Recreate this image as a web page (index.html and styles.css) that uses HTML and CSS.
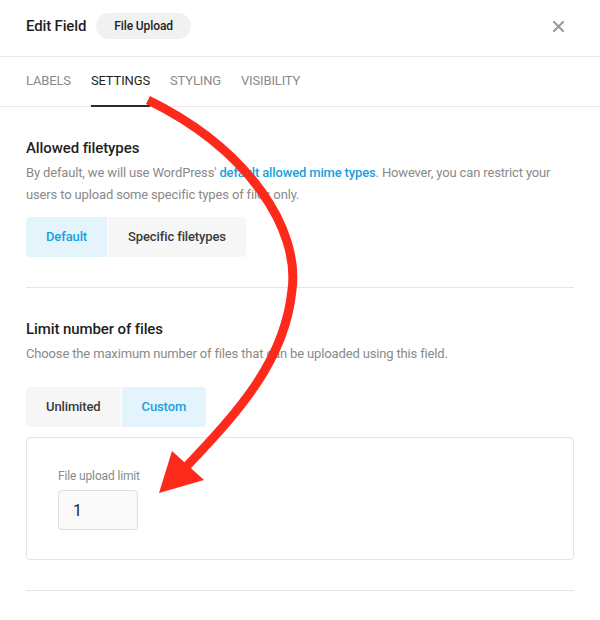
FILE: index.html
```html
<!DOCTYPE html>
<html lang="en">
<head>
<meta charset="utf-8">
<title>Edit Field</title>
<link rel="stylesheet" href="styles.css">
</head>
<body>
<div class="page">
  <header class="header">
    <h1 class="title">Edit Field</h1>
    <span class="pill">File Upload</span>
    <button class="close" aria-label="Close">
      <svg width="11" height="11" viewBox="0 0 11 11"><path d="M1 1L10 10M10 1L1 10" stroke="#999" stroke-width="2" stroke-linecap="square"/></svg>
    </button>
  </header>
  <nav class="tabs">
    <span class="tab">LABELS</span>
    <span class="tab active">SETTINGS</span>
    <span class="tab">STYLING</span>
    <span class="tab">VISIBILITY</span>
  </nav>
  <section class="section">
    <h2 class="heading">Allowed filetypes</h2>
    <p class="desc">By default, we will use WordPress' <a class="link" href="#">default allowed mime types</a>. However, you can restrict your users to upload some specific types of files only.</p>
    <div class="toggle first">
      <span class="opt on">Default</span>
      <span class="opt">Specific filetypes</span>
    </div>
  </section>
  <section class="section">
    <h2 class="heading">Limit number of files</h2>
    <p class="desc">Choose the maximum number of files that can be uploaded using this field.</p>
    <div class="toggle second">
      <span class="opt">Unlimited</span>
      <span class="opt on">Custom</span>
    </div>
    <div class="card">
      <label class="label">File upload limit</label>
      <div class="input">1</div>
    </div>
  </section>
  <svg class="arrow" width="600" height="620" viewBox="0 0 600 620">
    <path d="M148 100 C250 150 300 230 292 290 C285 360 240 410 186 467" fill="none" stroke="#fd2a1b" stroke-width="9"/>
    <polygon points="159,493 172,451 204,480" fill="#fd2a1b"/>
  </svg>
</div>
</body>
</html>
```
FILE: styles.css
```css
* { box-sizing: border-box; }
html, body { margin: 0; padding: 0; background: #fff; }
body { font-family: Roboto, "Noto Sans", Arial, sans-serif; color: #1f1f1f; }
.page { position: relative; width: 600px; height: 620px; overflow: hidden; }

.header {
  display: flex;
  align-items: center;
  padding: 13px 26px 17px;
  border-bottom: 1px solid #e8e8e8;
}
.title { margin: 0; font-size: 15px; font-weight: 500; line-height: 26px; color: #1f1f1f; letter-spacing: -0.15px; }
.pill {
  margin-left: 10px;
  height: 26px;
  line-height: 26px;
  padding: 0 18px;
  border-radius: 13px;
  background: #f1f1f1;
  font-size: 12px;
  font-weight: 500;
  color: #222;
  letter-spacing: -0.1px;
}
.close {
  margin-left: auto;
  margin-right: 10px;
  padding: 0;
  border: 0;
  background: none;
  display: flex;
  width: 11px;
  height: 11px;
}

.tabs {
  display: flex;
  gap: 20px;
  padding: 0 26px;
  border-bottom: 1px solid #e8e8e8;
}
.tab {
  position: relative;
  padding: 16px 0 17px;
  font-size: 13px;
  line-height: 16px;
  color: #8a8a8a;
  letter-spacing: -0.15px;
}
.tab.active { color: #1f1f1f; }
.tab.active::after {
  content: "";
  position: absolute;
  left: 0;
  right: 0;
  bottom: -1px;
  height: 2px;
  background: #2a2a2a;
}

.section {
  margin: 0 26px;
  padding: 30px 0;
  border-bottom: 1px solid #e6e6e6;
}
.heading { margin: 0; font-size: 15px; font-weight: 500; line-height: 22px; color: #1f1f1f; letter-spacing: -0.1px; }
.desc { margin: 3px 0 0; font-size: 13px; line-height: 22px; color: #8a8a8a; letter-spacing: -0.15px; }
.link { color: #1a9fe0; text-decoration: none; font-weight: 500; }

.toggle { display: flex; gap: 1px; }
.toggle.first { margin-top: 11px; }
.toggle.second { margin-top: 22px; }
.opt {
  height: 40px;
  line-height: 40px;
  padding: 0 20px;
  font-size: 13px;
  font-weight: 500;
  color: #3a3a3a;
  background: #f6f6f6;
  letter-spacing: -0.12px;
}
.opt:first-child { border-radius: 4px 0 0 4px; }
.opt:last-child { border-radius: 0 4px 4px 0; }
.opt.on { background: #e3f4fd; color: #1a9fe0; }

.card {
  margin-top: 10px;
  border: 1px solid #e5e5e5;
  border-radius: 4px;
  padding: 30px 31px 29px;
}
.label { display: block; font-size: 12px; line-height: 16px; color: #8a8a8a; letter-spacing: -0.15px; }
.input {
  margin-top: 6px;
  width: 80px;
  height: 40px;
  line-height: 40px;
  padding: 0 14px;
  border: 1px solid #dedede;
  border-radius: 4px;
  background: #f9f9f9;
  font-size: 16px;
  color: #1f1f1f;
}

.arrow { position: absolute; left: 0; top: 0; pointer-events: none; }
```
